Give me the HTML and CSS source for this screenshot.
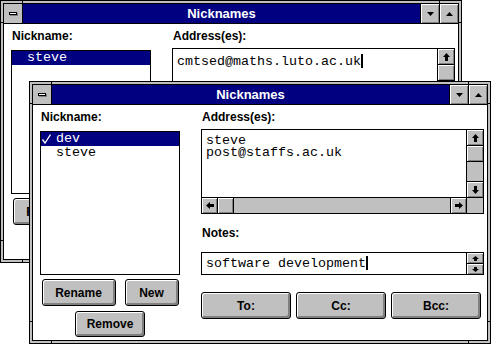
FILE: index.html
```html
<!DOCTYPE html>
<html lang="en">
<head>
    <meta charset="UTF-8">
    <title>Nicknames</title>
    <link rel="stylesheet" href="styles.css">
</head>
<body>

<div class="win back">
    <div class="frame">
        <div class="titlebar">
            <div class="sysbox"><span class="sysbar"></span></div>
            <div class="title">Nicknames</div>
            <div class="tbtn"><svg width="7" height="4" viewBox="0 0 7 4"><polygon points="0,0 7,0 3.5,4" fill="#000"/></svg></div>
            <div class="tbtn"><svg width="7" height="4" viewBox="0 0 7 4"><polygon points="0,4 7,4 3.5,0" fill="#000"/></svg></div>
        </div>
        <div class="client">
            <div class="col">
                <div class="label">Nickname:</div>
                <div class="listbox">
                    <div class="item sel"><span class="mark"></span>steve</div>
                </div>
                <div class="btnrow">
                    <div class="btn rename">Rename</div>
                    <div class="btn new"></div>
                </div>
            </div>
            <div class="col">
                <div class="label">Address(es):</div>
                <div class="addrbox">
                    <div class="addrtext">cmtsed@maths.luto.ac.uk<span class="caret"></span></div>
                    <div class="vscroll">
                        <div class="sb up"><svg width="7" height="8" viewBox="0 0 7 8"><polygon points="3.5,0 7,4 5,4 5,8 2,8 2,4 0,4" fill="#000"/></svg></div>
                        <div class="sb thumb"></div>
                        <div class="track"></div>
                        <div class="sb down"><svg width="7" height="8" viewBox="0 0 7 8"><polygon points="3.5,8 7,4 5,4 5,0 2,0 2,4 0,4" fill="#000"/></svg></div>
                    </div>
                    <div class="hscroll">
                        <div class="sb left"><svg width="8" height="7" viewBox="0 0 8 7"><polygon points="0,3.5 4,0 4,2 8,2 8,5 4,5 4,7" fill="#000"/></svg></div>
                        <div class="sb thumb"></div>
                        <div class="track"></div>
                        <div class="sb right"><svg width="8" height="7" viewBox="0 0 8 7"><polygon points="8,3.5 4,0 4,2 0,2 0,5 4,5 4,7" fill="#000"/></svg></div>
                    </div>
                    <div class="corner"></div>
                </div>
            </div>
        </div>
    </div>
</div>

<div class="win front">
    <div class="frame">
        <div class="titlebar">
            <div class="sysbox"><span class="sysbar"></span></div>
            <div class="title">Nicknames</div>
            <div class="tbtn"><svg width="7" height="4" viewBox="0 0 7 4"><polygon points="0,0 7,0 3.5,4" fill="#000"/></svg></div>
            <div class="tbtn"><svg width="7" height="4" viewBox="0 0 7 4"><polygon points="0,4 7,4 3.5,0" fill="#000"/></svg></div>
        </div>
        <div class="client">
            <div class="col">
                <div class="label">Nickname:</div>
                <div class="listbox">
                    <div class="item sel"><span class="mark"><svg width="9" height="10" viewBox="0 0 9 10"><polyline points="0.5,5.5 3,9 8.5,0.5" fill="none" stroke="#fff" stroke-width="1.3"/></svg></span>dev</div>
                    <div class="item"><span class="mark"></span>steve</div>
                </div>
                <div class="btnrow">
                    <div class="btn rename">Rename</div>
                    <div class="btn new">New</div>
                </div>
                <div class="btnrow">
                    <div class="btn remove">Remove</div>
                </div>
            </div>
            <div class="col">
                <div class="label">Address(es):</div>
                <div class="addrbox">
                    <div class="addrtext">steve<br>post@staffs.ac.uk</div>
                    <div class="vscroll">
                        <div class="sb up"><svg width="7" height="8" viewBox="0 0 7 8"><polygon points="3.5,0 7,4 5,4 5,8 2,8 2,4 0,4" fill="#000"/></svg></div>
                        <div class="sb thumb"></div>
                        <div class="track"></div>
                        <div class="sb down"><svg width="7" height="8" viewBox="0 0 7 8"><polygon points="3.5,8 7,4 5,4 5,0 2,0 2,4 0,4" fill="#000"/></svg></div>
                    </div>
                    <div class="hscroll">
                        <div class="sb left"><svg width="8" height="7" viewBox="0 0 8 7"><polygon points="0,3.5 4,0 4,2 8,2 8,5 4,5 4,7" fill="#000"/></svg></div>
                        <div class="sb thumb"></div>
                        <div class="track"></div>
                        <div class="sb right"><svg width="8" height="7" viewBox="0 0 8 7"><polygon points="8,3.5 4,0 4,2 0,2 0,5 4,5 4,7" fill="#000"/></svg></div>
                    </div>
                    <div class="corner"></div>
                </div>
                <div class="label notes-label">Notes:</div>
                <div class="notesbox">
                    <div class="notestext">software development<span class="caret"></span></div>
                    <div class="spin">
                        <div><svg width="7" height="5" viewBox="0 0 7 5"><polygon points="3.5,0 7,3 5,3 5,5 2,5 2,3 0,3" fill="#000"/></svg></div>
                        <div><svg width="7" height="5" viewBox="0 0 7 5"><polygon points="3.5,5 7,2 5,2 5,0 2,0 2,2 0,2" fill="#000"/></svg></div>
                    </div>
                </div>
                <div class="sendrow">
                    <div class="btn">To:</div>
                    <div class="btn">Cc:</div>
                    <div class="btn">Bcc:</div>
                </div>
            </div>
        </div>
    </div>
</div>

</body>
</html>
```

FILE: styles.css
```css
body {
    margin: 0;
    background: #fff;
    font-family: "Liberation Sans", Arial, sans-serif;
}

.win {
    position: absolute;
    width: 462px;
    height: 263px;
    box-sizing: border-box;
    border: 1px solid #000;
    padding: 2px;
    background:
        linear-gradient(#000, #000) left 21px top 0 / 1px 2px no-repeat,
        linear-gradient(#000, #000) right 21px top 0 / 1px 2px no-repeat,
        linear-gradient(#000, #000) left 21px bottom 0 / 1px 2px no-repeat,
        linear-gradient(#000, #000) right 21px bottom 0 / 1px 2px no-repeat,
        linear-gradient(#000, #000) left 0 top 21px / 2px 1px no-repeat,
        linear-gradient(#000, #000) left 0 bottom 21px / 2px 1px no-repeat,
        linear-gradient(#000, #000) right 0 top 21px / 2px 1px no-repeat,
        linear-gradient(#000, #000) right 0 bottom 21px / 2px 1px no-repeat,
        #c0c0c0;
}

.back {
    left: 0;
    top: 0;
}

.front {
    left: 29px;
    top: 81px;
}

.frame {
    height: 100%;
    box-sizing: border-box;
    border: 1px solid #000;
    display: flex;
    flex-direction: column;
    background: #fff;
}

.titlebar {
    flex: none;
    height: 19px;
    display: flex;
    border-bottom: 1px solid #000;
}

.sysbox {
    width: 18px;
    border-right: 1px solid #000;
    background: #c0c0c0;
    display: flex;
    align-items: center;
    justify-content: center;
}

.sysbar {
    width: 6px;
    height: 1px;
    border: 1px solid #000;
    background: #fff;
    box-shadow: 1px 1px #808080;
}

.title {
    flex: 1;
    background: #000080;
    color: #fff;
    font-size: 13px;
    font-weight: bold;
    line-height: 19px;
    text-align: center;
}

.tbtn {
    width: 18px;
    border-left: 1px solid #000;
    background: #c0c0c0;
    box-shadow: inset 1px 1px #fff, inset -1px -1px #808080;
    display: flex;
    align-items: center;
    justify-content: center;
}

.client {
    flex: 1;
    display: grid;
    grid-template-columns: 140px 283px;
    column-gap: 21px;
    align-items: start;
    padding: 5px 2px 0 7px;
}

.col {
    display: flex;
    flex-direction: column;
}

.label {
    font-size: 12px;
    font-weight: bold;
    line-height: 14px;
    padding-left: 1px;
}

.listbox {
    margin-top: 7px;
    height: 144px;
    box-sizing: border-box;
    border: 1px solid #000;
    font-family: "Liberation Mono", "Courier New", monospace;
    font-size: 13.33px;
}

.item {
    height: 14px;
    line-height: 14px;
    display: flex;
    align-items: center;
}

.item.sel {
    background: #000080;
    color: #fff;
}

.mark {
    width: 15px;
    padding-left: 1px;
    box-sizing: border-box;
    display: flex;
}

.btnrow {
    margin-top: 4px;
    display: flex;
    justify-content: center;
    gap: 9px;
}

.btnrow + .btnrow {
    margin-top: 5px;
}

.btn {
    height: 27px;
    box-sizing: border-box;
    border: 1px solid #000;
    border-radius: 3px;
    background: #c0c0c0;
    box-shadow: inset 1px 1px #fff, inset -2px -2px #808080;
    font-size: 12px;
    font-weight: bold;
    display: flex;
    align-items: center;
    justify-content: center;
}

.rename {
    width: 74px;
}

.new {
    width: 54px;
}

.remove {
    width: 70px;
    height: 26px;
}

.addrbox {
    margin-top: 5px;
    height: 85px;
    box-sizing: border-box;
    border: 1px solid #000;
    display: grid;
    grid-template-columns: 1fr 17px;
    grid-template-rows: 1fr 16px;
}

.addrtext {
    padding: 5px 4px 0;
    font-family: "Liberation Mono", "Courier New", monospace;
    font-size: 13.33px;
    line-height: 12px;
    white-space: nowrap;
    overflow: hidden;
}

.caret {
    display: inline-block;
    width: 2px;
    height: 14px;
    background: #000;
    vertical-align: -3px;
}

.sb {
    background: #c0c0c0;
    box-shadow: inset 1px 1px #fff, inset -1px -1px #808080;
    display: flex;
    align-items: center;
    justify-content: center;
}

.track {
    flex: 1;
}

.vscroll {
    border-left: 1px solid #000;
    background: #c0c0c0;
    display: flex;
    flex-direction: column;
}

.vscroll .sb {
    height: 15px;
}

.vscroll .up,
.vscroll .thumb {
    border-bottom: 1px solid #000;
}

.vscroll .down {
    border-top: 1px solid #000;
}

.hscroll {
    border-top: 1px solid #000;
    background: #c0c0c0;
    display: flex;
}

.hscroll .sb {
    width: 15px;
}

.hscroll .left,
.hscroll .thumb {
    border-right: 1px solid #000;
}

.hscroll .right {
    border-left: 1px solid #000;
}

.corner {
    border-top: 1px solid #000;
    border-left: 1px solid #000;
    background: #c0c0c0;
}

.notes-label {
    margin-top: 12px;
}

.notesbox {
    margin-top: 12px;
    height: 23px;
    box-sizing: border-box;
    border: 1px solid #000;
    display: flex;
}

.notestext {
    flex: 1;
    padding-left: 4px;
    font-family: "Liberation Mono", "Courier New", monospace;
    font-size: 13.33px;
    line-height: 21px;
    white-space: nowrap;
}

.spin {
    width: 16px;
    border-left: 1px solid #000;
    display: flex;
    flex-direction: column;
}

.spin div {
    flex: 1;
    background: #c0c0c0;
    box-shadow: inset 1px 1px #fff, inset -1px -1px #808080;
    display: flex;
    align-items: center;
    justify-content: center;
}

.spin div + div {
    border-top: 1px solid #000;
}

.sendrow {
    margin-top: 17px;
    display: grid;
    grid-template-columns: repeat(3, 90px);
    column-gap: 5px;
}
```
